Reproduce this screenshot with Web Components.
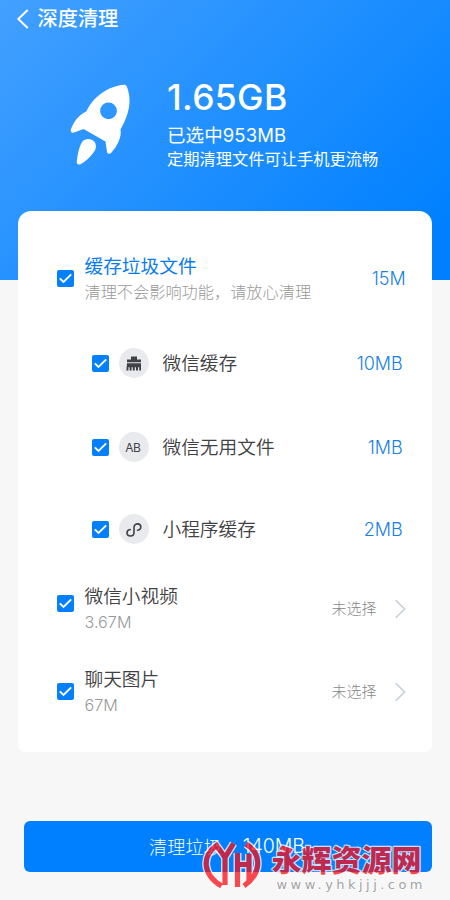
<!DOCTYPE html>
<html lang="zh-CN">
<head>
<meta charset="utf-8">
<title>深度清理</title>
<style>
html,body{margin:0;padding:0}
body{width:450px;height:900px;overflow:hidden;background:#f7f7f7;font-family:Inter,"Noto Sans CJK SC",sans-serif}
</style>
</head>
<body>
<clean-app></clean-app>
<script>
function define(name, render) {
  customElements.define(name, class extends HTMLElement {
    connectedCallback() {
      if (this.shadowRoot) return;
      this.attachShadow({mode: 'open'}).innerHTML = render(this);
    }
  });
}
define('clean-check', () => `
<style>:host{display:block;width:17px;height:17px;flex:none}svg{display:block}</style>
<svg width="17" height="17" viewBox="0 0 17 17"><rect width="17" height="17" rx="2" fill="#0580fd"/><path d="M2.8 8.3 6.5 12 14.2 4.3" fill="none" stroke="#fff" stroke-width="1.9"/></svg>`);

define('clean-badge', el => {
  const art = {
    brush: '<path d="M12 8.5h6v3h4v2.7H8v-2.7h4zM8 15.2h14V22.5h-1.8v-3.2h-1.2v3.2h-2v-3.2h-1.2v3.2h-2v-3.2h-1.2v3.2h-2v-3.2h-1.2v3.2H7.4z" fill="#404247"/>',
    ab: '<text x="14" y="20" text-anchor="middle" font-family="Inter,sans-serif" font-size="12" textLength="15.5" fill="#404247">AB</text>',
    mini: '<path d="M18.6 16.3c2.1-.3 3.2-1.6 3.2-3.2 0-1.9-1.5-3.2-3.3-3.2s-3.5 1.3-3.5 3.3v5.4c0 2-1.5 3.4-3.5 3.4s-3.5-1.3-3.5-3.2c0-1.7 1.2-3 3.2-3.3" fill="none" stroke="#404247" stroke-width="1.6" stroke-linecap="round"/>'
  };
  return `<style>:host{display:block;width:30px;height:30px;flex:none}svg{display:block}</style>
<svg width="30" height="30" viewBox="0 0 30 30"><circle cx="15" cy="15" r="15" fill="#e9eaee"/>${art[el.getAttribute('kind')]}</svg>`;
});

define('clean-hero', () => `
<style>
:host{display:block;height:280px;box-sizing:border-box;background:linear-gradient(135deg,#43a0ff 0%,#0080ff 92%);color:#fff}
header{display:flex;align-items:center;height:38px;padding-left:16px;gap:6.5px;font-size:20.2px;font-weight:500;line-height:38px}
header svg,.sum svg{display:block;flex:none}
.sum{display:flex;padding:42px 0 0 66px;gap:34px}
.size{font-size:35.5px;line-height:36px;font-weight:450;margin-top:0;white-space:nowrap;letter-spacing:.3px}
.picked{font-size:18.5px;line-height:24px;margin-top:7px;font-weight:400;letter-spacing:.1px}
.tip{font-size:16.25px;line-height:24px;white-space:nowrap;font-weight:400}
</style>
<header><svg width="15" height="22" viewBox="0 0 15 22"><path d="M11.7 2 2.3 11l9.4 9" fill="none" stroke="#fff" stroke-width="2"/></svg><span>深度清理</span></header>
<div class="sum">
<svg width="67" height="90" viewBox="66 80 67 90"><path fill="#fff" fill-rule="evenodd" d="M124 84.7C108 86 93 97 86.5 111.2C79 114.5 73.5 122 70.8 129.5C70.2 132 71.8 133.2 74 132.5L83.6 129L105.5 141.5L107 152C107.5 154.5 110 154.3 111.5 152.5C117 146.5 122 137 120.5 129.5C126 120 130 109 129.5 99C129.2 94 128.2 90 126.8 86.5C126.2 85.2 125.2 84.6 124 84.7ZM108.5 102.5a8.4 8.4 0 1 1 0 16.8a8.4 8.4 0 1 1 0-16.8Z"/><path fill="#fff" d="M83.5 140.5C86.5 138 92 138.5 94.2 141.5C97 145 96.2 149.5 93.5 152.5C90 157.5 85.5 161.5 80.5 164.2C78 165.2 76.5 163.8 76.8 161.5C77.6 154 79.5 144 83.5 140.5Z"/></svg>
<div><div class="size">1.65GB</div><div class="picked">已选中953MB</div><div class="tip">定期清理文件可让手机更流畅</div></div>
</div>`);

define('clean-section', el => `
<style>
:host{display:flex;align-items:center;height:64px;padding:0 26.5px 0 39px;--t:#3f4145}
:host([accent]){--t:#087cee}
clean-check{margin-bottom:var(--lift,0px)}
.text{margin-left:10.5px;flex:1;white-space:nowrap;margin-top:1px}
.title{font-size:18.7px;line-height:26px;color:var(--t);font-weight:350}
:host([accent]) .title{font-weight:400}
.note{font-size:16.2px;line-height:24px;font-weight:300;color:#999}
.side{font-size:18px;color:#187fe6;line-height:24px;display:flex;align-items:center;letter-spacing:-.1px;font-weight:350;margin-top:1px}
.state{font-size:15px;color:#888;font-weight:300;letter-spacing:0}
svg{display:block;margin-left:18px}
</style>
<clean-check></clean-check>
<div class="text"><div class="title">${el.getAttribute('title-text')}</div><div class="note">${el.getAttribute('note')}</div></div>
<div class="side">${el.hasAttribute('size') ? el.getAttribute('size') : '<span class="state">未选择</span><svg width="11" height="20" viewBox="0 0 11 20"><path d="m.7 1.3 9 8.7-9 8.7" fill="none" stroke="#c5ced6" stroke-width="1.5"/></svg>'}</div>`);

define('clean-item', el => `
<style>
:host{display:flex;align-items:center;height:30px;padding:0 29.5px 0 74px}
clean-badge{margin-left:10px}
.name{flex:1;margin:2px 0 0 13.5px;font-size:18.7px;line-height:26px;color:#3f4145;font-weight:350}
.size{font-size:18px;line-height:26px;margin-top:1px;color:#187fe6;letter-spacing:-.1px;font-weight:350}
</style>
<clean-check></clean-check><clean-badge kind="${el.getAttribute('kind')}"></clean-badge><div class="name"><slot></slot></div><div class="size">${el.getAttribute('size')}</div>`);

define('clean-card', () => `
<style>:host{display:flex;flex-direction:column;box-sizing:border-box;width:414px;height:541px;margin:-69px 0 0 18px;padding-top:35px;background:#fff;border-radius:13px 13px 7px 7px;position:relative}</style><slot></slot>`);

define('clean-button', () => `
<style>
:host{display:flex;align-items:center;box-sizing:border-box;width:408px;height:51px;margin:69px 0 0 24px;padding:0 0 2px 125px;background:#0080ff;border-radius:6px;color:#fff;font-size:18.2px;font-weight:300;white-space:pre}
.amount{margin-left:21px;font-size:19.5px}
</style><span><slot></slot></span><span class="amount"><slot name="amount"></slot></span>`);

define('site-mark', () => `
<style>:host{position:absolute;left:200px;top:836px;width:230px;height:60px;display:block}svg{display:block}</style>
<svg width="230" height="60" viewBox="200 836 230 60">
<defs><path id="yh" d="M221.5 886C202 874 202 856 216.5 845.5L225 857.5V885M233.5 843.5L225 857.5M237.5 887V853M237.5 864.5H249M249 881V854M246 844C262 854 262 873 244 886"/></defs>
<g opacity=".76" fill="none">
<use href="#yh" stroke="#fff" stroke-width="8"/>
<use href="#yh" stroke="#fa1018" stroke-width="5.2"/>
<text x="271.5" y="871" textLength="150" lengthAdjust="spacingAndGlyphs" font-family="Noto Sans CJK SC,sans-serif" font-size="30" font-weight="900" fill="#fa1018" stroke="#fff" stroke-width="2.4" paint-order="stroke" stroke-linejoin="round">永辉资源网</text>
</g>
<text x="276.5" y="889" textLength="146" font-family="DejaVu Sans,sans-serif" font-size="13" fill="#a2a2a2" stroke="#fff" stroke-width="1" paint-order="stroke">www.yhkjjj.com</text>
</svg>`);

define('clean-app', () => `
<style>
:host{display:block;width:450px;height:900px;position:relative}
[kind=brush]{margin-top:38px}[kind=ab]{margin-top:54px}[kind=mini]{margin-top:52px}
.video{margin-top:32px;--lift:9px}.photo{margin-top:19px}
</style>
<clean-hero></clean-hero>
<clean-card>
<clean-section accent title-text="缓存垃圾文件" note="清理不会影响功能，请放心清理" size="15M"></clean-section>
<clean-item kind="brush" size="10MB">微信缓存</clean-item>
<clean-item kind="ab" size="1MB">微信无用文件</clean-item>
<clean-item kind="mini" size="2MB">小程序缓存</clean-item>
<clean-section class="video" title-text="微信小视频" note="3.67M"></clean-section>
<clean-section class="photo" title-text="聊天图片" note="67M"></clean-section>
</clean-card>
<clean-button>清理垃圾<span slot="amount">140MB</span></clean-button>
<site-mark></site-mark>`);
</script>
</body>
</html>
